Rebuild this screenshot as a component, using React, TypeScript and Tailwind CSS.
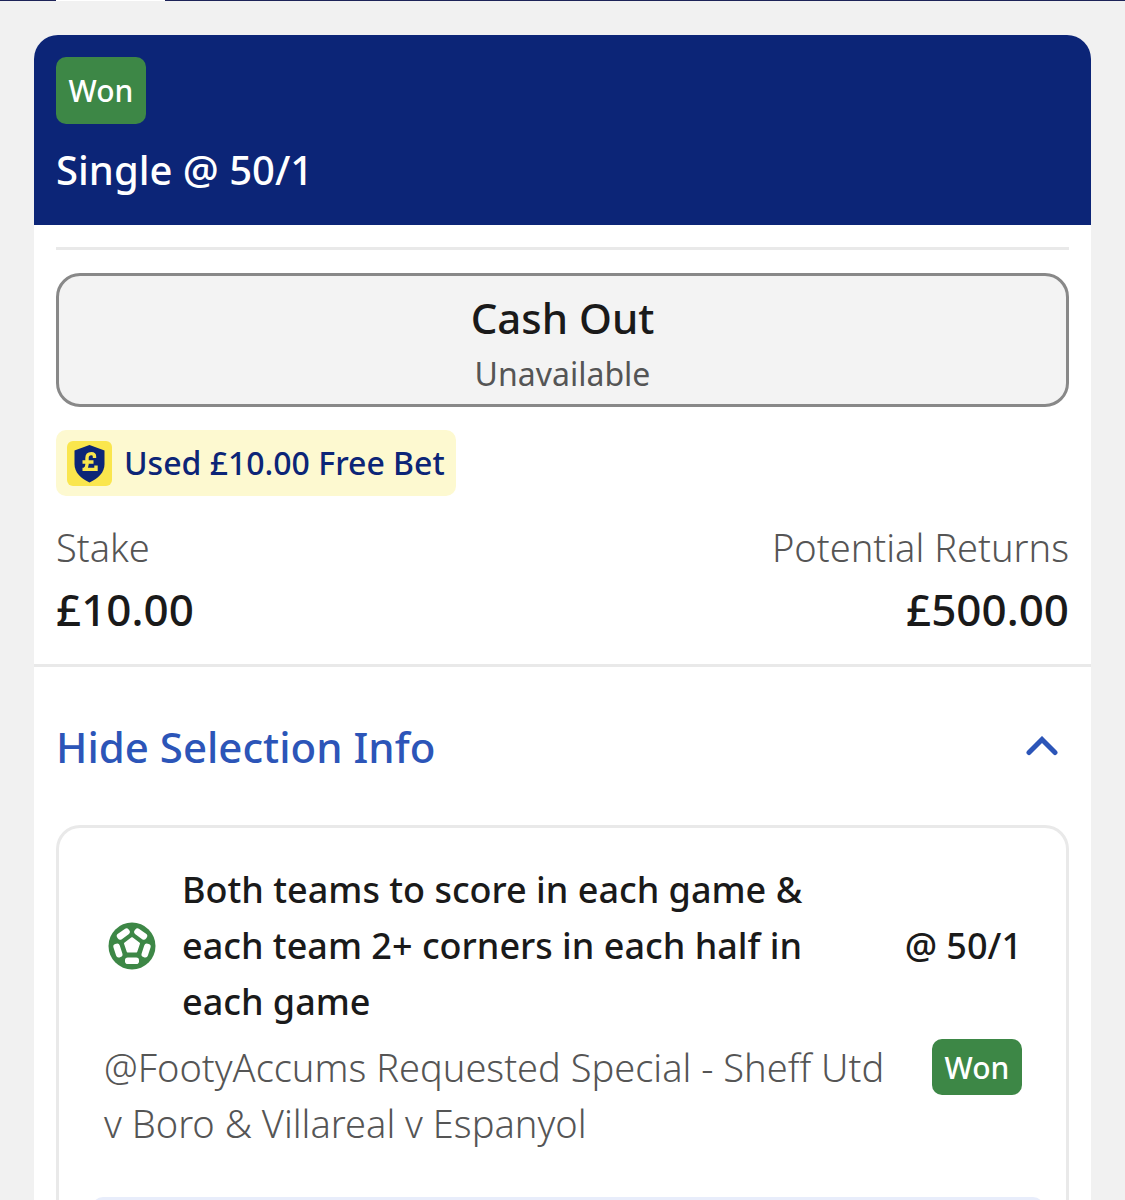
import type { ReactNode } from "react";

function WonBadge({ className = "" }: { className?: string }) {
  return (
    <span
      className={`inline-flex w-[90px] items-center justify-center rounded-[10px] bg-[#3d8746] text-[30px] font-medium text-white ${className}`}
    >
      Won
    </span>
  );
}

function FreeBetIcon() {
  return (
    <svg viewBox="0 0 45 45" className="h-[45px] w-[45px]" aria-hidden="true">
      <rect width="45" height="45" rx="6" fill="#fae64d" />
      <path
        d="M22.5 4L37.5 9.5V23C37.5 31.5 31.5 37 22.5 41.5C13.5 37 7.5 31.5 7.5 23V9.500Z"
        fill="#0c2577"
      />
      <path
        d="M27.500 17V15.500C27.500 13.500 26.200 12.600 24.300 12.600C21.500 12.600 20 14.200 20 17V23.500C20 25.700 19 27.200 17.500 28.400M15.500 28.400H29V24.500M15.500 21H26.500"
        fill="none"
        stroke="#fae64d"
        strokeWidth="3.400"
      />
    </svg>
  );
}

function FootballIcon() {
  return (
    <svg viewBox="0 0 48 48" className="h-12 w-12 shrink-0" aria-hidden="true">
      <circle cx="24" cy="24" r="23.500" fill="#3d8746" />
      <path
        d="M24 16L31.200 21.400L28.500 29.600H19.500L16.800 21.400Z"
        fill="white"
        stroke="white"
        strokeWidth="1.600"
        strokeLinejoin="round"
      />
      <g fill="white">
        <rect x="17" y="35.500" width="14" height="6.600" rx="2.800" />
        <rect x="17" y="35.500" width="14" height="6.600" rx="2.800" transform="rotate(72 24 24)" />
        <rect x="17" y="35.500" width="14" height="6.600" rx="2.800" transform="rotate(144 24 24)" />
        <rect x="17" y="35.500" width="14" height="6.600" rx="2.800" transform="rotate(216 24 24)" />
        <rect x="17" y="35.500" width="14" height="6.600" rx="2.800" transform="rotate(288 24 24)" />
      </g>
    </svg>
  );
}

function Amount({ label, children }: { label: string; children: ReactNode }) {
  return (
    <div>
      <dt className="text-[38px] leading-[54px] font-light text-[#555]">{label}</dt>
      <dd className="text-[44px] leading-[70px] font-medium">{children}</dd>
    </div>
  );
}

export default function App() {
  return (
    <div className="flex min-h-screen flex-col bg-[#f1f1f1] font-['Noto_Sans',sans-serif] text-[#1a1a1a]">
      <div className="h-px bg-[#1d2358] pl-14">
        <div className="h-px w-[109px] bg-white" />
      </div>
      <main className="mx-[34px] mt-[34px] flex flex-1 flex-col rounded-t-[24px] bg-white">
        <header className="flex h-[190px] flex-col items-start rounded-t-[24px] bg-[#0c2577] px-[22px] pt-[22px] text-white">
          <WonBadge className="h-[67px]" />
          <h1 className="mt-[18px] text-[40px] leading-[56px] font-medium">Single @ 50/1</h1>
        </header>

        <section className="px-[22px] pt-[22px]">
          <hr className="border-t-[3px] border-[#e9e9e9]" />
          <button
            type="button"
            disabled
            className="mt-[23px] flex h-[134px] w-full flex-col items-center justify-center rounded-[24px] border-[3px] border-[#888] bg-[#f3f3f3] pt-2"
          >
            <span className="text-[42px] leading-[60px] font-medium">Cash Out</span>
            <span className="text-[32px] leading-[52px] text-[#555]">Unavailable</span>
          </button>
          <p className="mt-[23px] inline-flex h-[66px] items-center gap-3 rounded-[10px] bg-[#fdf9d0] px-[11px] text-[32px] font-medium text-[#0c2577]">
            <FreeBetIcon />
            Used £10.00 Free Bet
          </p>
          <dl className="mt-6 flex justify-between">
            <Amount label="Stake">£10.00</Amount>
            <div className="text-right">
              <Amount label="Potential Returns">£500.00</Amount>
            </div>
          </dl>
        </section>

        <section className="mt-5 flex flex-1 flex-col border-t-[3px] border-[#e9e9e9] px-[22px]">
          <button
            type="button"
            aria-expanded="true"
            className="flex h-[158px] w-full items-center justify-between pr-[11px] text-left text-[42px] font-medium text-[#2c55b8]"
          >
            Hide Selection Info
            <svg viewBox="0 0 32 20" className="h-5 w-8" aria-hidden="true">
              <path
                d="M3 16.500L16 3.500L29 16.500"
                fill="none"
                stroke="currentColor"
                strokeWidth="5"
                strokeLinecap="round"
              />
            </svg>
          </button>

          <article className="flex flex-1 flex-col rounded-t-[24px] border-x-[3px] border-t-[3px] border-[#e9e9e9] pt-[34px] pr-[22px] pl-[33px]">
            <div className="flex items-center pr-[22px] pl-4">
              <FootballIcon />
              <h2 className="ml-[26px] max-w-[640px] flex-1 text-[36px] leading-[56px] font-medium">
                Both teams to score in each game & each team 2+ corners in each half in each game
              </h2>
              <span className="ml-auto text-[36px] font-medium">@ 50/1</span>
            </div>
            <div className="mt-[9px] flex items-start justify-between pr-[22px] pl-3">
              <p className="max-w-[800px] text-[38px] leading-[56px] font-light text-[#555]">
                @FootyAccums Requested Special - Sheff Utd v Boro & Villareal v Espanyol
              </p>
              <WonBadge className="h-14" />
            </div>
            <div className="mt-[46px] h-[3px] overflow-hidden">
              <div className="h-12 rounded-t-[11px] bg-[#e8edfb]" />
            </div>
          </article>
        </section>
      </main>
    </div>
  );
}
